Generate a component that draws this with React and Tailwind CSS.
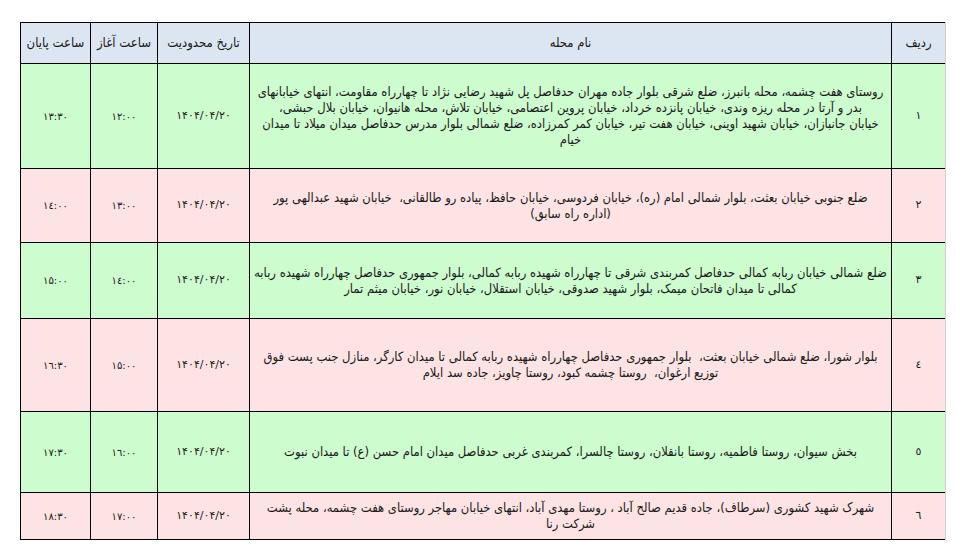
import React from "react";

const rows = [
  {
    n: "۱",
    lines: [
      "روستای هفت چشمه، محله بانبرز، ضلع شرقی بلوار جاده مهران حدفاصل پل شهید رضایی نژاد تا چهارراه مقاومت، انتهای خیابانهای",
      "بدر و آرتا در محله ریزه وندی، خیابان پانزده خرداد، خیابان پروین اعتصامی، خیابان تلاش، محله هانیوان، خیابان بلال حبشی،",
      "خیابان جانبازان، خیابان شهید اوینی، خیابان هفت تیر، خیابان کمر کمرزاده، ضلع شمالی بلوار مدرس حدفاصل میدان میلاد تا میدان",
      "خیام",
    ],
    start: "۱۲:۰۰",
    end: "۱۳:۳۰",
    green: true,
    h: "h-[105px]",
  },
  {
    n: "۲",
    lines: [
      "ضلع جنوبی خیابان بعثت، بلوار شمالی امام (ره)، خیابان فردوسی، خیابان حافظ، پیاده رو طالقانی،  خیابان شهید عبدالهی پور",
      "(اداره راه سابق)",
    ],
    start: "۱۳:۰۰",
    end: "۱٤:۰۰",
    green: false,
    h: "h-[74px]",
  },
  {
    n: "۳",
    lines: [
      "ضلع شمالی خیابان ربابه کمالی حدفاصل کمربندی شرقی تا چهارراه شهیده ربابه کمالی، بلوار جمهوری حدفاصل چهارراه شهیده ربابه",
      "کمالی تا میدان فاتحان میمک، بلوار شهید صدوقی، خیابان استقلال، خیابان نور، خیابان میثم تمار",
    ],
    start: "۱٤:۰۰",
    end: "۱۵:۰۰",
    green: true,
    h: "h-[76px]",
  },
  {
    n: "٤",
    lines: [
      "بلوار شورا، ضلع شمالی خیابان بعثت،  بلوار جمهوری حدفاصل چهارراه شهیده ربابه کمالی تا میدان کارگر، منازل جنب پست فوق",
      "توزیع ارغوان،  روستا چشمه کبود، روستا چاویز، جاده سد ایلام",
    ],
    start: "۱۵:۰۰",
    end: "۱٦:۳۰",
    green: false,
    h: "h-[93px]",
  },
  {
    n: "٥",
    lines: [
      "بخش سیوان، روستا فاطمیه، روستا بانقلان، روستا چالسرا، کمربندی غربی حدفاصل میدان امام حسن (ع) تا میدان نبوت",
    ],
    start: "۱٦:۰۰",
    end: "۱۷:۳۰",
    green: true,
    h: "h-[81px]",
  },
  {
    n: "٦",
    lines: [
      "شهرک شهید کشوری (سرطاف)، جاده قدیم صالح آباد ، روستا مهدی آباد، انتهای خیابان مهاجر روستای هفت چشمه، محله پشت",
      "شرکت رنا",
    ],
    start: "۱۷:۰۰",
    end: "۱۸:۳۰",
    green: false,
    h: "h-[47px]",
  },
];

const App = () => {
  return (
    <div className="w-[956px] h-[552px] bg-white pt-[22px] pl-[20px] font-['DejaVu_Sans',sans-serif] text-[#1a1a1a]">
      <table
        dir="rtl"
        className="w-[925px] table-fixed border-collapse border-t border-b border-l border-black"
      >
        <colgroup>
          <col className="w-[54px]" />
          <col className="w-[642px]" />
          <col className="w-[92px]" />
          <col className="w-[67px]" />
          <col className="w-[70px]" />
        </colgroup>
        <thead>
          <tr className="h-[41px] bg-[#dce6f2] text-[13px] font-['DejaVu_Sans_Condensed','DejaVu_Sans',sans-serif]">
            <th className="font-normal border-l border-black border-r border-r-[#cfcfcf]">ردیف</th>
            <th className="font-normal border-l border-black">نام محله</th>
            <th className="font-normal border-l border-black">تاریخ محدودیت</th>
            <th className="font-normal border-l border-black">ساعت آغاز</th>
            <th className="font-normal">ساعت پایان</th>
          </tr>
        </thead>
        <tbody>
          {rows.map((r) => (
            <tr
              key={r.n}
              className={`${r.h} border-t border-black ${
                r.green ? "bg-[#cdfcce]" : "bg-[#fde3e3]"
              }`}
            >
              <td className="text-center text-[11px] border-l border-black border-r border-r-[#cfcfcf]">
                {r.n}
              </td>
              <td className="text-center font-['DejaVu_Sans_Condensed','DejaVu_Sans',sans-serif] text-[12.9px] leading-[16px] px-[1px] border-l border-black whitespace-pre-wrap">
                {r.lines.map((l, i) => (
                  <div key={i}>{l}</div>
                ))}
              </td>
              <td className="text-center text-[11px] border-l border-black">
                <span dir="ltr">۱۴۰۴/۰۴/۲۰</span>
              </td>
              <td className="text-center text-[10px] border-l border-black">
                <span dir="ltr">{r.start}</span>
              </td>
              <td className="text-center text-[10px]">
                <span dir="ltr">{r.end}</span>
              </td>
            </tr>
          ))}
        </tbody>
      </table>
    </div>
  );
};

export default App;
